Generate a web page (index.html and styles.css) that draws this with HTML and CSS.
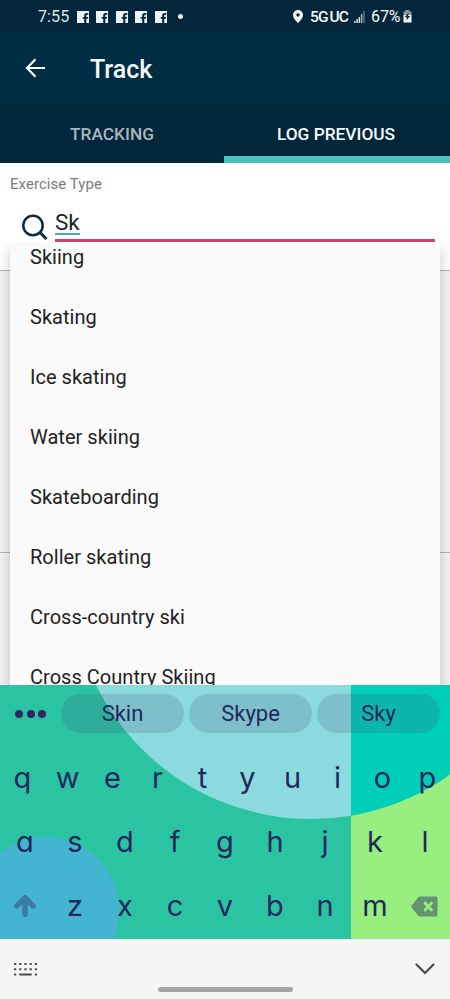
FILE: index.html
```html
<!DOCTYPE html>
<html lang="en">
<head>
<meta charset="utf-8">
<title>Track</title>
<link rel="stylesheet" href="styles.css">
</head>
<body>
<svg class="defs" aria-hidden="true">
  <symbol id="fb" viewBox="0 0 12 12"><path fill="#e9f5fb" d="M0 0h12v12H9.300V7.700h1.500l.3-1.800H9.300V4.800c0-.7.300-1 1-1h1V2.100H9.600C8 2.100 7.200 3 7.200 4.500v1.400H5.700v1.800h1.500V12H0z"/></symbol>
</svg>
<div class="screen">
  <header>
    <div class="status">
      <div class="status-left">
        <span class="time">7:55</span>
        <svg class="fb"><use href="#fb"/></svg><svg class="fb"><use href="#fb"/></svg><svg class="fb"><use href="#fb"/></svg><svg class="fb"><use href="#fb"/></svg><svg class="fb"><use href="#fb"/></svg>
        <i class="dot"></i>
      </div>
      <div class="status-right">
        <svg class="pin" viewBox="0 0 10 13"><path fill="#f2fafd" fill-rule="evenodd" d="M5 0a5 5 0 0 1 5 5c0 3-3 6-5 8C3 11 0 8 0 5a5 5 0 0 1 5-5zm0 3.200a1.800 1.800 0 1 0 0 3.600 1.800 1.800 0 0 0 0-3.600z"/></svg>
        <span class="net">5G<span class="uc">UC</span></span>
        <svg class="signal" viewBox="0 0 11 12"><path fill="#d5e2e8" d="M0 10h1.500v2H0zM2.300 8h1.500v4H2.300zM4.600 6h1.500v6H4.600z"/><path fill="#a5b5be" d="M6.900 3h1.500v9H6.900z"/><path fill="#5d7480" d="M9.200 0h1.500v12H9.200z"/></svg>
        <span class="pct">67%</span>
        <svg class="battery" viewBox="0 0 9 13"><path fill="#8799a3" d="M2.500 0h4v1.500H8.500V5h-8V1.500h2z"/><path fill="#f2fafd" d="M.5 5h8v7.500h-8z"/><path fill="#03263a" d="M5.800 2.500 1.700 7.200h2.200L3.200 10.500 7.300 6H5z"/></svg>
      </div>
    </div>
    <div class="appbar">
      <svg class="back" viewBox="0 0 20 20"><path d="M19.500 10H2M10 1.300 1.500 10l8.500 8.700" fill="none" stroke="#f7fbfd" stroke-width="2.200"/></svg>
      <h1>Track</h1>
    </div>
    <nav class="tabs"><div class="tab">TRACKING</div><div class="tab active">LOG PREVIOUS</div></nav>
  </header>
  <main>
    <section class="exercise">
      <div class="label">Exercise Type</div>
      <div class="search">
        <svg class="glass" viewBox="0 0 26 27"><g fill="none" stroke="#102a3b" stroke-width="2.500"><circle cx="11" cy="11.500" r="9.700"/><path d="m18 18.500 6.500 6.500" stroke-width="3"/></g></svg>
        <div class="field"><span>Sk</span></div>
      </div>
    </section>
    <section class="block"></section>
    <ul class="dropdown">
      <li>Skiing</li><li>Skating</li><li>Ice skating</li><li>Water skiing</li><li>Skateboarding</li><li>Roller skating</li><li>Cross-country ski</li><li>Cross Country Skiing</li>
    </ul>
  </main>
  <div class="keyboard">
    <svg class="art" viewBox="0 685 450 254">
      <clipPath id="left"><path d="M0 685h351v254H0z"/></clipPath>
      <clipPath id="right"><path d="M351 685h99v254h-99z"/></clipPath>
      <path fill="#2bc4a3" d="M0 685h351v254H0z"/>
      <path fill="#98ee7e" d="M351 685h99v254h-99z"/>
      <circle cx="311" cy="579.500" r="239.500" fill="#8bdbde" clip-path="url(#left)"/>
      <circle cx="311" cy="579.500" r="239.500" fill="#00ceb7" clip-path="url(#right)"/>
      <circle cx="45.500" cy="911" r="74" fill="#43b5d1"/>
    </svg>
    <div class="keys">
      <div class="suggestions">
        <div class="more"><i></i><i></i><i></i></div>
        <div class="chip">Skin</div><div class="chip">Skype</div><div class="chip">Sky</div>
      </div>
      <div class="row"><b>q</b><b>w</b><b>e</b><b>r</b><b>t</b><b>y</b><b>u</b><b>i</b><b>o</b><b>p</b></div>
      <div class="row"><b>a</b><b>s</b><b>d</b><b>f</b><b>g</b><b>h</b><b>j</b><b>k</b><b>l</b></div>
      <div class="row">
        <b><svg class="shift" viewBox="0 0 22 23"><path d="M11 20.500V4M2.800 12 11 3.500 19.200 12" fill="none" stroke="#3a7ba5" stroke-width="5.400" stroke-linecap="round" stroke-linejoin="round"/></svg></b>
        <b>z</b><b>x</b><b>c</b><b>v</b><b>b</b><b>n</b><b>m</b>
        <b><svg class="del" viewBox="0 0 27 21"><path fill="#63946f" d="M9 .5h16q1.500 0 1.500 1.500v17q0 1.500-1.500 1.500H9q-1 0-1.700-.8L.8 11.800q-1-1.300 0-2.600L7.300 1.300Q8 .5 9 .5z"/><path d="m14 7 6.500 7m0-7L14 14" stroke="#98ee7e" stroke-width="2.800" stroke-linecap="round"/></svg></b>
      </div>
    </div>
  </div>
  <footer>
    <svg class="kbd" viewBox="0 0 23 13"><g fill="none" stroke="#4c4c4e" stroke-width="2"><path d="M0 1h23M0 6.200h23" stroke-dasharray="2.200 3"/><path d="M0 11.500h2.200M20.800 11.500H23"/><path d="M6 11.500h11" stroke-linecap="round"/></g></svg>
    <i class="home"></i>
    <svg class="chev" viewBox="0 0 20 12"><path d="m1.500 1.500 8.500 8.500 8.500-8.500" fill="none" stroke="#4b4b4d" stroke-width="2.200" stroke-linecap="round"/></svg>
  </footer>
</div>
</body>
</html>
```
FILE: styles.css
```css
* { box-sizing: border-box; }
body { margin: 0; font-family: Roboto, sans-serif; }
svg { display: block; flex: none; }
.defs { position: absolute; width: 0; height: 0; }
.screen { width: 450px; height: 999px; display: flex; flex-direction: column; overflow: hidden; background: #f2f2f2; }
header { flex: none; color: #f5fafc; }
.status { height: 33px; background: #03263a; display: flex; justify-content: space-between; padding: 0 38px 0 38px; }
.status-left, .status-right { display: flex; align-items: center; }
.time { font-size: 16px; width: 39px; letter-spacing: .1px; color: #d9e8ef; }
.fb { width: 12px; height: 12px; margin-right: 7.400px; }
.dot { width: 5px; height: 5px; border-radius: 50%; background: #edf7fb; margin-left: 4px; }
.pin { width: 10px; height: 13px; margin-right: 7px; }
.net { font-size: 15.500px; font-weight: 500; width: 44px; letter-spacing: -.9px; white-space: nowrap; }
.uc { margin-left: 2px; }
.signal { width: 11px; height: 12px; margin-right: 6px; }
.pct { font-size: 16px; width: 32px; letter-spacing: -.1px; }
.battery { width: 9px; height: 13px; }
.appbar { height: 70px; background: #002d44; display: flex; align-items: center; padding-left: 25px; }
.back { width: 21px; height: 20px; }
h1 { margin: 2px 0 0 44px; font-size: 25px; font-weight: 500; }
.tabs { height: 60px; display: flex; background: #02273a; }
.tab { flex: 1; text-align: center; font-size: 17.300px; font-weight: 500; line-height: 62px; color: #a7b6bf; }
.tab.active { color: #f5fafc; padding-right: 2px; border-bottom: 7px solid #4dbfbe; }
main { height: 522px; flex: none; position: relative; overflow: hidden; }
.exercise { height: 108px; background: #fff; border-bottom: 1px solid #b5b5b5; padding: 12px 15px 0 10px; }
.label { font-size: 15px; line-height: 19px; color: #7b7b7b; letter-spacing: .05px; }
.search { display: flex; height: 48px; padding-left: 12px; }
.glass { width: 26px; height: 27px; margin: 20px 7px 0 0; }
.field { flex: 1; height: 48px; border-bottom: 3px solid #ca446d; font-size: 22.500px; color: #222; padding-top: 16px; line-height: 24px; }
.field span { display: inline-block; height: 25px; border-bottom: 2px solid #45a9cf; }
.block { height: 282px; border-bottom: 1px solid #b5b5b5; }
.dropdown { position: absolute; left: 10px; right: 10px; top: 79px; height: 460px; margin: 0; padding: 0; list-style: none; background: #fafafa; border-radius: 3px; box-shadow: 0 7px 13px rgba(0,0,0,.22); clip-path: inset(0 -30px -30px -30px); }
.dropdown li { height: 60px; padding-left: 20px; font-size: 20px; line-height: 31px; color: #222; letter-spacing: .03px; }
.keyboard { height: 254px; flex: none; position: relative; color: #22285a; }
.art { position: absolute; inset: 0; width: 450px; height: 254px; }
.keys { position: relative; }
.suggestions { height: 61px; display: flex; padding: 9px 5px 0 15px; }
.more { width: 46px; flex: none; height: 40px; display: flex; align-items: center; gap: 3.500px; }
.more i { width: 8px; height: 8px; border-radius: 50%; background: #302760; }
.chip { width: 123px; height: 39px; margin-right: 5px; flex: none; border-radius: 20px; background: rgba(62,70,120,.18); text-align: center; line-height: 40px; font-size: 22px; }
.row { display: flex; height: 64px; }
.row b { flex: 1; display: flex; align-items: center; justify-content: center; font: 400 29px/64px Inter, sans-serif; font-feature-settings: "cv11"; }
.shift { width: 22px; height: 23px; margin-top: -2px; }
.del { width: 27px; height: 21px; margin-right: 2px; }
footer { height: 60px; background: #f5f5f5; display: flex; justify-content: space-between; padding: 24px 15px 0 14px; }
.kbd { width: 23px; height: 13px; }
.home { width: 135px; height: 5px; border-radius: 3px; background: #a5a5a5; margin: 24px 0 0 -1px; }
.chev { width: 20px; height: 12px; }
```
